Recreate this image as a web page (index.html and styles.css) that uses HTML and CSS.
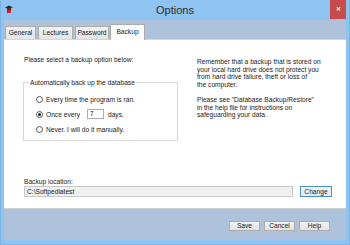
FILE: index.html
```html
<!DOCTYPE html>
<html>
<head>
<meta charset="utf-8">
<title>Options</title>
<link rel="stylesheet" href="styles.css">
</head>
<body>
<div class="window">
  <div class="titlebar">
    <div class="tb-left">
      <svg class="app-icon" width="8" height="9" viewBox="0 0 8 9">
        <polygon points="0,2.5 4,0.5 8,2.5 4,4.5" fill="#1d2a33"/>
        <rect x="2" y="3.5" width="4" height="4.5" fill="#d0202a"/>
        <rect x="2" y="3.5" width="4" height="1.2" fill="#1d2a33"/>
        <rect x="6.6" y="2.6" width="0.8" height="3.5" fill="#e9c23a"/>
      </svg>
    </div>
    <div class="title">Options</div>
    <div class="tb-right"><div class="close">&#x2715;</div></div>
  </div>
  <div class="client">
    <div class="tabs">
      <div class="tab tab-general">General</div>
      <div class="tab tab-lectures">Lectures</div>
      <div class="tab tab-password">Password</div>
      <div class="tab tab-backup selected">Backup</div>
    </div>
    <div class="panel">
      <div class="top">
        <div class="left">
          <div class="intro">Please select a backup option below:</div>
          <fieldset class="group">
            <legend>Automatically back up the database</legend>
            <div class="opt"><span class="radio"></span>Every time the program is ran.</div>
            <div class="opt"><span class="radio checked"></span>Once every<span class="num">7</span>days.</div>
            <div class="opt"><span class="radio"></span>Never. I will do it manually.</div>
          </fieldset>
        </div>
        <div class="right">
          <p>Remember that a backup that is stored on<br>your local hard drive does not protect you<br>from hard drive failure, theft or loss of<br>the computer.</p>
          <p>Please see "Database Backup/Restore"<br>in the help file for instructions on<br>safeguarding your data.</p>
        </div>
      </div>
      <div class="location">
        <div class="loc-label">Backup location:</div>
        <div class="loc-row">
          <div class="loc-input">C:\Softpediatest</div>
          <div class="btn btn-change">Change</div>
        </div>
      </div>
    </div>
    <div class="footer">
      <div class="btn">Save</div>
      <div class="btn">Cancel</div>
      <div class="btn">Help</div>
    </div>
  </div>
</div>
</body>
</html>
```
FILE: styles.css
```css
* { box-sizing: border-box; }
html, body { margin: 0; padding: 0; }
body {
  width: 350px;
  height: 245px;
  overflow: hidden;
  background: #8fc3f2;
  font-family: "Liberation Sans", Arial, sans-serif;
  font-size: 6.65px;
  color: #1a1a1a;
}
.window {
  width: 350px;
  height: 245px;
  padding: 0 4px 5px 4px;
  border: 1px solid #7fb3e3;
  border-top: none;
}
.titlebar {
  height: 20px;
  margin: 0 -4px;
  display: grid;
  grid-template-columns: 1fr auto 1fr;
  align-items: center;
}
.tb-left { padding-left: 4px; display: flex; align-items: center; }
.app-icon { display: block; margin-top: -1px; }
.title {
  font-size: 11px;
  color: #2b2b2b;
  line-height: 20px;
}
.tb-right { display: flex; justify-content: flex-end; align-self: start; padding-right: 3px; }
.close {
  width: 16px;
  height: 19px;
  background: #c74a4c;
  color: #fff;
  font-size: 6px;
  font-weight: bold;
  line-height: 19px;
  text-align: center;
}
.client {
  height: 220px;
  background: #afc2dc;
  display: flex;
  flex-direction: column;
  margin-left: -1px;
  margin-right: -1px;
}
.tabs {
  height: 19px;
  display: flex;
  align-items: flex-end;
  padding-left: 1px;
}
.tab {
  height: 13px;
  line-height: 12px;
  text-align: center;
  border: 1px solid #acacac;
  border-bottom: none;
  background: linear-gradient(#f2f2f2, #e4e4e4);
  margin-right: 2px;
}
.tab-general { width: 31px; }
.tab-lectures { width: 35px; }
.tab-password { width: 34px; }
.tab-backup { width: 35px; }
.tab.selected {
  height: 16px;
  line-height: 14px;
  background: #fff;
  margin-left: -1px;
  margin-bottom: -1px;
  position: relative;
  z-index: 1;
}
.panel {
  height: 170px;
  background: #fff;
  border-top: 1px solid #d6d6d6;
  border-bottom: 1px solid #cdcdcd;
  padding: 15px 0 0 19px;
}
.top { display: flex; gap: 19px; }
.left { width: 155px; }
.intro { line-height: 9px; padding-left: 1px; }
.group {
  margin: 14.5px 0 0 0;
  padding: 5px 0 3.5px 0;
  border: 1px solid #d9d9d9;
  min-width: 0;
}
.group legend {
  line-height: 8px;
  padding: 0 1px;
  margin-left: 5px;
}
.opt {
  height: 15px;
  display: flex;
  align-items: center;
  padding-left: 12px;
}
.radio {
  width: 7px;
  height: 7px;
  border: 1px solid #555;
  border-radius: 50%;
  background: #fff;
  margin-right: 3px;
  position: relative;
}
.radio.checked::after {
  content: "";
  position: absolute;
  left: 1px; top: 1px;
  width: 3px; height: 3px;
  border-radius: 50%;
  background: #222;
}
.num {
  width: 17px;
  height: 10px;
  border: 1px solid #abadb3;
  margin: 0 4px 0 7px;
  padding-left: 2px;
  line-height: 8px;
}
.right { padding-top: 3px; }
.right p {
  margin: 0 0 7.6px 0;
  line-height: 7.6px;
  white-space: nowrap;
}
.location { margin-top: 37px; padding-left: 1px; }
.loc-label { line-height: 8px; }
.loc-row { display: flex; gap: 7px; }
.loc-input {
  width: 269px;
  height: 11px;
  border: 1px solid #c8c8c8;
  background: #f0f0f0;
  line-height: 9px;
  padding-left: 2px;
}
.btn {
  width: 31px;
  height: 10px;
  border: 1px solid #acacac;
  background: linear-gradient(#f2f2f2, #e3e3e3);
  line-height: 8px;
  text-align: center;
}
.btn-change {
  width: 32px;
  height: 11px;
  line-height: 9px;
  border-color: #4a90cf;
  background: linear-gradient(#eef5fb, #dcebf8);
}
.footer {
  flex: 1;
  display: flex;
  justify-content: flex-end;
  gap: 4px;
  padding: 12px 16px 0 0;
}
```
